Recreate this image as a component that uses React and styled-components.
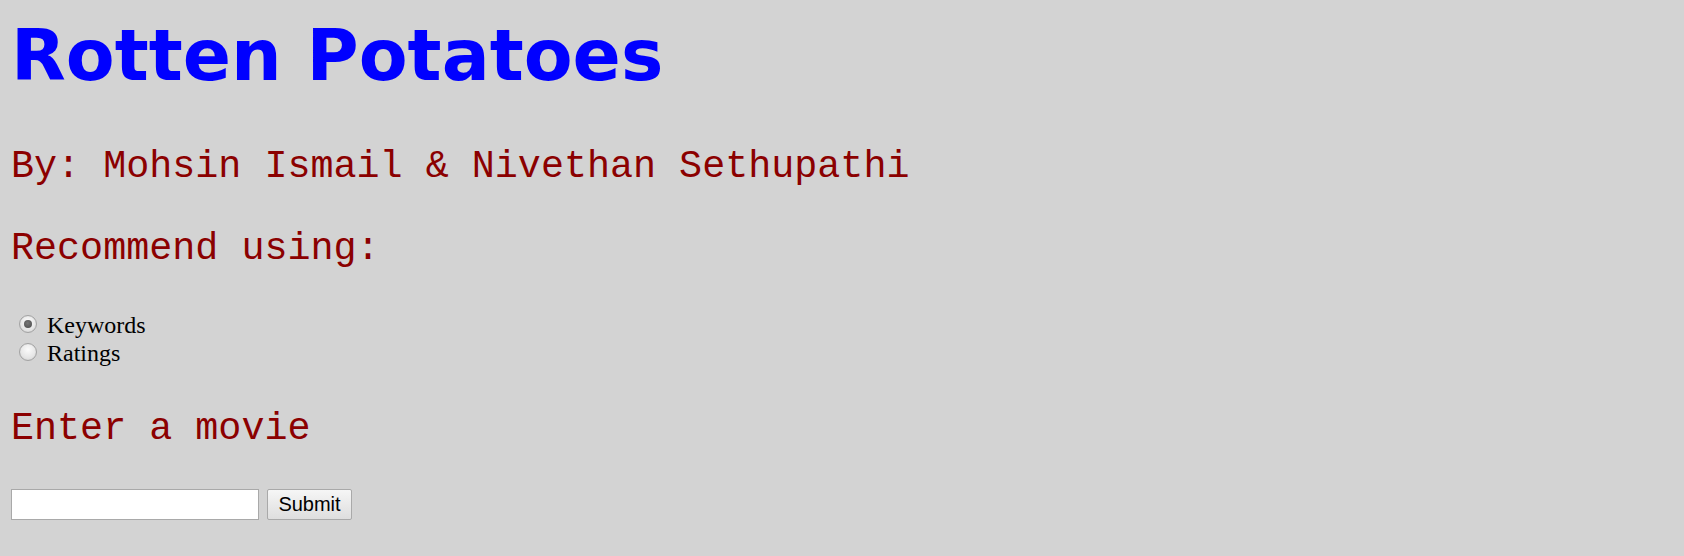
import React from "react";
import styled, { createGlobalStyle } from "styled-components";

const Global = createGlobalStyle`
  html, body { margin: 0; padding: 0; background: #d3d3d3; }
  body { font-family: "Liberation Serif", serif; }
`;

const Page = styled.div`
  padding: 14px 11px 0 11px;
  min-height: 556px;
  box-sizing: border-box;
`;

const Title = styled.h1`
  margin: 0;
  font-family: "DejaVu Sans", Verdana, sans-serif;
  font-weight: bold;
  font-size: 71.2px;
  line-height: 84px;
  color: #0000ff;
`;

const Heading = styled.h2`
  margin: ${(p) => p.$top}px 0 0 0;
  font-family: "Liberation Mono", "Courier New", monospace;
  font-weight: normal;
  font-size: 38.4px;
  line-height: 44px;
  color: #8b0000;
`;

const RadioGroup = styled.div`
  margin-top: 40px;
  display: flex;
  flex-direction: column;
`;

const RadioRow = styled.label`
  display: flex;
  align-items: flex-start;
  height: 28px;
  font-family: "Liberation Serif", "Times New Roman", serif;
  font-size: 24px;
  line-height: 28px;
  color: #000;
`;

const Radio = styled.input.attrs({ type: "radio" })`
  appearance: none;
  -webkit-appearance: none;
  box-sizing: border-box;
  width: 18px;
  height: 18px;
  margin: 4px 10px 0 8px;
  border-radius: 50%;
  border: 1px solid #a3a3a3;
  background: radial-gradient(circle at 50% 35%, #fbfbfb 0%, #e6e6e6 60%, #d6d6d6 100%);
  box-shadow: inset 0 0 1px rgba(0, 0, 0, 0.15);
  position: relative;
  flex: none;
  &:checked::after {
    content: "";
    position: absolute;
    left: 50%;
    top: 50%;
    width: 8px;
    height: 8px;
    margin: -4px 0 0 -4px;
    border-radius: 50%;
    background: radial-gradient(circle at 45% 40%, #777 0%, #4a4a4a 100%);
  }
`;

const Form = styled.form`
  margin-top: 38px;
  display: flex;
  align-items: flex-start;
  gap: 8px;
`;

const TextInput = styled.input.attrs({ type: "text" })`
  box-sizing: border-box;
  width: 248px;
  height: 31px;
  margin: 0;
  border: 1px solid #a9a9a9;
  background: #fff;
  font-family: "Liberation Sans", Arial, sans-serif;
  font-size: 18px;
  padding: 2px 4px;
  outline: none;
`;

const Button = styled.button`
  box-sizing: border-box;
  width: 85px;
  height: 31px;
  margin: 0;
  padding: 0;
  border: 1px solid #a9a9a9;
  border-radius: 2px;
  background: linear-gradient(#f6f6f6, #dedede);
  font-family: "Liberation Sans", Arial, sans-serif;
  font-size: 20px;
  color: #000;
`;

export default function App() {
  return (
    <>
      <Global />
      <Page>
        <Title>Rotten Potatoes</Title>
        <Heading $top={47}>By: Mohsin Ismail &amp; Nivethan Sethupathi</Heading>
        <Heading $top={38}>Recommend using:</Heading>
        <RadioGroup>
          <RadioRow>
            <Radio name="mode" value="keywords" defaultChecked />
            Keywords
          </RadioRow>
          <RadioRow>
            <Radio name="mode" value="ratings" />
            Ratings
          </RadioRow>
        </RadioGroup>
        <Heading $top={40}>Enter a movie</Heading>
        <Form onSubmit={(e) => e.preventDefault()}>
          <TextInput />
          <Button type="submit">Submit</Button>
        </Form>
      </Page>
    </>
  );
}
